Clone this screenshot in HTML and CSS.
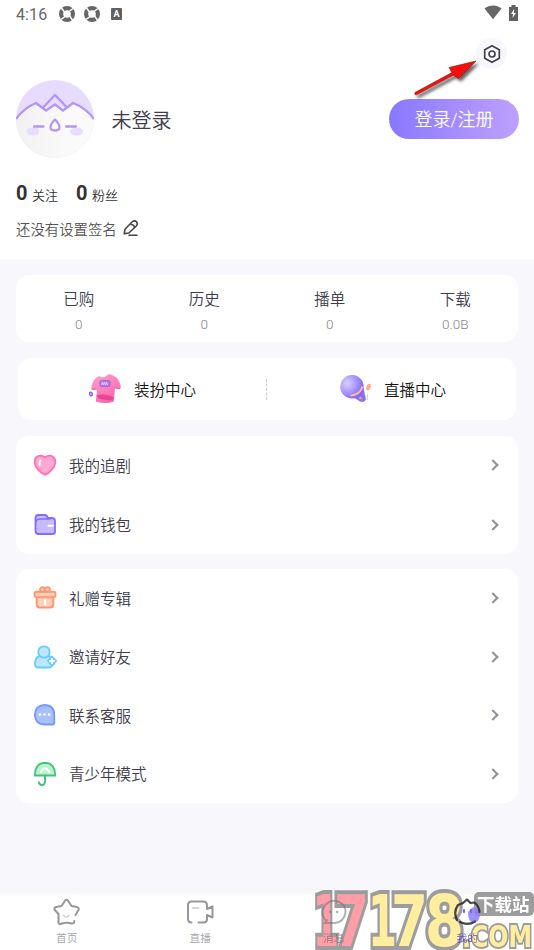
FILE: index.html
```html
<!DOCTYPE html>
<html lang="zh-CN">
<head>
<meta charset="utf-8">
<title>我的</title>
<link rel="stylesheet" href="styles.css">
</head>
<body>
<header class="profile">
  <div class="status">
    <span class="time">4:16</span>
    <svg class="st-ic" width="16" height="16" viewBox="0 0 16 16"><circle cx="8" cy="8" r="5.900" fill="none" stroke="#666" stroke-width="4.200"/><path d="M2.500 2l3 4M14 2.500l-4 3M13.500 14l-3-4M2 13.500l4-3" stroke="#fff" stroke-width="1.500"/></svg>
    <svg class="st-ic gap" width="16" height="16" viewBox="0 0 16 16"><circle cx="8" cy="8" r="5.900" fill="none" stroke="#666" stroke-width="4.200"/><path d="M2.500 2l3 4M14 2.500l-4 3M13.500 14l-3-4M2 13.500l4-3" stroke="#fff" stroke-width="1.500"/></svg>
    <span class="badge-a">A</span>
    <svg class="wifi" width="18" height="15" viewBox="0 0 18 15"><path d="M.5 3.600C5.500-.4 12.500-.4 17.500 3.600L9 14.300z" fill="#666"/></svg>
    <svg class="batt" width="9" height="16" viewBox="0 0 9 16"><path d="M2.500 0h4v2H9v14H0V2h2.500z" fill="#606060"/><path d="M5.200 4L2 9h2l-.4 4L7 8H5z" fill="#fff"/></svg>
  </div>
  <div class="tools"><span class="settings"><svg width="20" height="20" viewBox="0 0 20 20" fill="none" stroke="#41404f" stroke-width="1.700" stroke-linejoin="round"><path d="M10 1.700l7.300 4v8.600l-7.300 4-7.300-4V5.700z"/><circle cx="10" cy="10" r="3"/></svg></span></div>
  <div class="user">
    <svg width="78" height="78" viewBox="0 0 78 78">
      <defs><clipPath id="face"><circle cx="39" cy="39" r="39"/></clipPath><linearGradient id="fg"><stop offset="0" stop-color="#f1f1f2"/><stop offset=".65" stop-color="#fafafa"/></linearGradient></defs>
      <g clip-path="url(#face)"><path fill="#e7dbff" d="M0 0h78v78H0z"/><path fill="url(#fg)" d="M0 39Q8 28 20 23l8 5 11-3 11 3 7-5q13 5 21 16v39H0z"/>
      <path d="M0 39Q8 28 20 23l10 7.500 9-6 8 6 10-7.500q13 5 21 16" fill="none" stroke="#b195fb" stroke-width="2.300" stroke-linejoin="round"/><path d="M27 27.500l12-12.500L51 27.500" fill="none" stroke="#b195fb" stroke-width="2.300" stroke-linejoin="round"/></g>
      <ellipse cx="17" cy="51.500" rx="6.500" ry="4" fill="#e7dbff"/><ellipse cx="60.500" cy="51.500" rx="6.500" ry="4" fill="#e7dbff"/>
      <path d="M18 46.500h9.500M50 46.500h10" stroke="#b195fb" stroke-width="2.300" stroke-linecap="round"/><path d="M39 39.500c6 6 6 11 0 11s-6-5 0-11z" fill="#fff" stroke="#b195fb" stroke-width="2.300" stroke-linejoin="round"/>
    </svg>
    <h1>未登录</h1>
    <button class="login">登录/注册</button>
  </div>
  <div class="counts"><b>0</b><span>关注</span><b class="second">0</b><span>粉丝</span></div>
  <div class="sign"><span>还没有设置签名</span><svg width="16" height="16" viewBox="0 0 16 16" fill="none" stroke="#444" stroke-width="1.600" stroke-linejoin="round" stroke-linecap="round"><path d="M1.200 13.800l.8-4.500L9 2q2.300-2.200 4.300-.3t0 4.300l-7.500 7z"/><path d="M8 4.500q3 0 3.600 3M6 15.200h8"/></svg></div>
  <svg class="arrow" width="78" height="56" viewBox="0 0 78 56"><defs><filter id="sh" x="-20%" y="-20%" width="150%" height="160%"><feDropShadow dx="2.500" dy="3" stdDeviation="1.700" flood-opacity=".6"/></filter></defs><path filter="url(#sh)" d="M4 37.500L41 17.500l-3-5L65 6 47.500 23.500l-5-3.500L5.500 39.800q-2.500 0-1.500-2.300z" fill="#fc0d0d" stroke="#7a1010" stroke-width=".6"/></svg>
</header>
<main>
  <section class="card stats">
    <div><span>已购</span><small>0</small></div><div><span>历史</span><small>0</small></div><div><span>播单</span><small>0</small></div><div><span>下载</span><small>0.0B</small></div>
  </section>
  <section class="card centers">
    <div class="center dress"><svg width="34" height="32" viewBox="0 0 34 32"><defs><linearGradient id="pk" x1="0" y1="0" x2=".6" y2="1"><stop stop-color="#ffa4d1"/><stop offset="1" stop-color="#fb65aa"/></linearGradient></defs><path d="M11 3q5 3 9-1.500 2-.8 4 .5l5 3q3 3.500 4 10l-2 1-4-.5-1.200 13q-8 3-18 0L9 18l-1-1.500-4 .5-1-1Q4 6 11 3z" fill="url(#pk)"/><path d="M4 16.500l4-.5M27 14.500l5 1" stroke="#e4679f" fill="none"/><ellipse cx="17" cy="24.300" rx="8.500" ry="2.600" fill="#e6468f" transform="rotate(8 17 24)"/><rect x="12" y="7.500" width="10" height="6" rx="1.500" fill="#b57be8" stroke="#9565e2"/><path d="M13.500 11.800l1-2.300 1 2.300 1-2.300 1 2.300 1-2.300 1 2.300" stroke="#f8d9ff" fill="none" stroke-width=".9"/><ellipse cx="3" cy="21" rx="1.200" ry="1.800" fill="none" stroke="#7563ff" stroke-width="1.500" transform="rotate(-20 3 21)"/></svg><span>装扮中心</span></div>
    <i class="divider"></i>
    <div class="center live"><svg width="32" height="30" viewBox="0 0 32 30"><defs><radialGradient id="ball" cx=".3" cy=".35" r=".75"><stop stop-color="#d9d0ff"/><stop offset=".55" stop-color="#a594ff"/><stop offset="1" stop-color="#7862fa"/></radialGradient></defs><path d="M11 22l12.500-8 2.500 11.500q-1.500 3.500-6 2z" fill="#8873f6"/><circle cx="12" cy="12.800" r="11.700" fill="url(#ball)"/><path d="M10.500 21.500q9.500-.5 12-9" stroke="#ffb09f" stroke-width="2.200" fill="none"/><circle cx="20.500" cy="24" r="1.300" fill="#ff9b86"/><ellipse cx="28.500" cy="13" rx="2" ry="3.400" transform="rotate(20 28.500 13)" fill="#ffa17d"/><path d="M28 11.700h1.300M27.600 14h1.300" stroke="#ffe3d6" stroke-width=".7"/><path d="M27.500 20v6" stroke="#cfc6ff" stroke-width=".8"/></svg><span>直播中心</span></div>
  </section>
  <section class="card list first">
    <div class="row"><svg viewBox="0 0 24 24"><path d="M12 4.300C7 .3 1.300 4 1.600 9.500 2 15 8 20 12 21.700 16 20 22 15 22.400 9.500 22.700 4 17 .3 12 4.300z" fill="#ffa9d4" stroke="#ff72af" stroke-width="1.800"/><path d="M7.500 7.500Q6 9 6.800 12" fill="none" stroke="#fff" stroke-width="1.800" stroke-linecap="round"/></svg><span>我的追剧</span><i></i></div>
    <div class="row"><svg viewBox="0 0 24 24"><path d="M2.500 11V5q0-3 3-3H12q2 0 2.800 3h4Q22 5 22 8v11q0 2-2.500 2h-14q-3 0-3-3z" fill="#c8baff" stroke="#846bff" stroke-width="1.800"/><path d="M2.500 9q1-3 4-3h11" fill="none" stroke="#846bff" stroke-width="1.600"/><path d="M15.500 12.800h4.500" stroke="#fff" stroke-width="2" stroke-linecap="round"/></svg><span>我的钱包</span><i></i></div>
  </section>
  <section class="card list second">
    <div class="row"><svg viewBox="0 0 24 24" fill="#ffd0bb" stroke="#ff976e" stroke-width="1.900"><path d="M3.700 10h16.600v8.500q0 3-3 3H6.700q-3 0-3-3z"/><rect x="1.500" y="5.800" width="21" height="5.400" rx="2"/><circle cx="9.500" cy="3.600" r="2.400"/><circle cx="14.500" cy="3.600" r="2.400"/><path d="M12 13.500v5.500" stroke="#fff" stroke-width="2.200"/></svg><span>礼赠专辑</span><i></i></div>
    <div class="row"><svg viewBox="0 0 24 24" fill="#bce9ff" stroke="#69caff" stroke-width="1.800"><path d="M2 19q0-7 5-8h9q4 2 5 8l-4 3.500H5q-3 0-3-3.500z"/><circle cx="11" cy="7" r="5.700"/><path d="M19 11.500l4.300 4.500-4.300 4.500-4.300-4.500z" fill="#69caff" stroke-linejoin="round"/><path d="M19 13v6M16 16h6" stroke="#fff" stroke-width="1.900"/></svg><span>邀请好友</span><i></i></div>
    <div class="row"><svg viewBox="0 0 24 24"><path d="M11.500 2q9.500 0 9.800 10v7.500q0 2-2 2h-7.800q-9.500-.5-9.700-9.500Q2 2.500 11.500 2z" fill="#a9c0ff" stroke="#7698ff" stroke-width="1.800" stroke-linejoin="round"/><path d="M7 11.500h.1M11.500 11.500h.1M16 11.500h.1" stroke="#fff" stroke-width="2.700" stroke-linecap="round"/></svg><span>联系客服</span><i></i></div>
    <div class="row"><svg viewBox="0 0 24 24" fill="none" stroke="#3ec57b" stroke-width="1.900" stroke-linecap="round"><path d="M1.900 13.500Q2 1 12 .800q10 .2 10.200 12.700z" fill="#bdf2cd" stroke-linejoin="round"/><path d="M12 13.500v6q0 3.500-3.200 3.500-2.300 0-3-2.700"/><path d="M7.800 10Q12 2.500 16.200 10" stroke="#fff"/></svg><span>青少年模式</span><i></i></div>
  </section>
</main>
<nav>
  <div><svg width="28" height="28" viewBox="0 0 28 28" fill="none" stroke="#97959e" stroke-width="2" stroke-linecap="round" stroke-linejoin="round"><path d="M22.500 17l3-5q1-2.200-1.500-2.900L18.500 8 15 2.700q-1.500-1.700-3 0L8.500 8 3 9Q.5 9.800 1.800 12L5.500 16v8.500q.3 2 2.500 1.300 5.500-2 10.500-.3 3 .5 2.800-2.500"/><path d="M10.500 17.500q3 3 5.500 0" stroke="#d0ced5" stroke-width="1.500"/></svg><span>首页</span></div>
  <div><svg width="28" height="28" viewBox="0 0 28 28" fill="none" stroke="#97959e" stroke-width="2" stroke-linecap="round" stroke-linejoin="round"><path d="M5.500 24.500Q2 24.500 2 21V7q0-3.500 3.500-3.500H17q4 0 4 4V11l5.500-2.500v11L21 17v4q0 3.500-3.500 3.500h-5"/><path d="M6.500 10h6" stroke="#ccc9d1" stroke-width="1.500"/></svg><span>直播</span></div>
  <div class="over"><svg width="28" height="28" viewBox="0 0 28 28" fill="none" stroke="#77727c" stroke-width="2" stroke-linecap="round"><path d="M5 21.500Q0 15 4.500 8 10 1 18 3.500q8 3 7.500 11Q24 24 15 25H5l2-3"/><path d="M10 14h.1M17 14h.1" stroke-width="2.500"/></svg><span>消息</span></div>
  <div class="over active"><svg width="28" height="28" viewBox="0 0 28 28" fill="none" stroke="#29232f" stroke-width="2.200" stroke-linecap="round" stroke-linejoin="round"><path d="M20 9q11 2 5 14Q15 28 15 14z" fill="#8f7dff" stroke="none"/><path d="M4 22Q0 14 5 7l5-2 4-3.500L17.500 5l4-.5Q26 8 26.500 14M7 24q8 4 15-.5"/><path d="M11 12v2M18 12v2" stroke="#6049e6"/></svg><span>我的</span></div>
  <svg class="watermark" width="224" height="62" viewBox="0 0 224 62">
    <g class="digits"><g class="pink"><text x="3" y="57" textLength="26" lengthAdjust="spacingAndGlyphs">1</text><text x="24" y="57" textLength="35" lengthAdjust="spacingAndGlyphs">7</text></g><g><text x="58" y="57" textLength="29" lengthAdjust="spacingAndGlyphs">1</text><text x="81" y="57" textLength="37" lengthAdjust="spacingAndGlyphs">7</text><text x="115" y="57" textLength="39" lengthAdjust="spacingAndGlyphs">8</text></g></g>
    <text class="dotcom" x="152" y="58" textLength="70" lengthAdjust="spacingAndGlyphs">.COM</text>
    <rect x="164" y="3" width="60" height="24" rx="5" fill="#858585"/><text class="site" x="167" y="21.500">下载站</text>
  </svg>
</nav>
</body>
</html>
```

FILE: styles.css
```css
* { box-sizing: border-box; }
body { margin: 0; width: 534px; height: 950px; overflow: hidden; display: flex; flex-direction: column; background: #f7f7fc; color: #403d4c; font-family: Roboto, "Noto Sans CJK SC", sans-serif; font-weight: 350; }
svg { display: block; flex: none; }
.profile { height: 259px; background: #fff; padding: 0 16px; position: relative; flex: none; }
.status { height: 28px; display: flex; align-items: center; color: #666; }
.time { font-size: 16px; font-weight: 400; width: 43px; letter-spacing: .1px; }
.gap { margin-left: 9px; }
.badge-a { width: 11px; height: 12px; margin-left: 11px; background: #606060; color: #fff; border-radius: 1px; font: bold 9px/12px Roboto; text-align: center; }
.wifi { margin: -3px 7px 0 auto; }
.batt { margin-top: -3px; }
.tools { height: 52px; display: flex; justify-content: flex-end; padding: 10px 11px 0 0; }
.settings { width: 31px; height: 31px; border-radius: 50%; background: #f7f7fc; display: grid; place-items: center; }
.user { height: 78px; display: flex; align-items: center; }
h1 { font-size: 20px; font-weight: 350; margin: 3px auto 0 17.500px; line-height: 30px; }
.login { width: 130px; height: 40px; border: 0; border-radius: 20px; background: linear-gradient(90deg, #8978ff, #bfa0ff); color: #fff; font: 350 18px/42px Roboto, "Noto Sans CJK SC", sans-serif; padding: 0; margin-right: -1px; }
.counts { height: 26px; margin-top: 21px; display: flex; align-items: baseline; color: #333; }
.counts b { font-size: 20px; font-weight: 700; line-height: 28px; width: 16px; }
.counts .second { margin-left: 18px; }
.counts span { font-size: 13px; }
.sign { display: flex; align-items: center; gap: 6px; height: 24px; margin-top: 11px; font-size: 14.400px; color: #555; }
.arrow { position: absolute; left: 411px; top: 55px; }
main { padding: 16px 16px 0; flex: 1; }
.card { background: #fff; border-radius: 13px; }
.stats { height: 67px; display: grid; grid-template-columns: repeat(4, 1fr); }
.stats div { display: flex; flex-direction: column; align-items: center; padding-top: 13px; }
.stats span { font-size: 15.500px; line-height: 24px; }
.stats small { font-size: 13.500px; line-height: 20px; margin-top: 2px; color: #85838b; }
.centers { height: 62px; margin: 16px 2px; display: flex; align-items: center; color: #111; font-size: 15.500px; }
.center { display: flex; align-items: center; }
.dress { gap: 12px; width: 248px; padding-left: 70px; }
.live { gap: 12px; padding-left: 73px; }
.divider { height: 21px; border-left: 1px dashed #ccc; }
.list { display: flex; flex-direction: column; margin-bottom: 16px; }
.first { height: 118px; }
.second.card { height: 234px; margin-top: -1px; }
.row { display: flex; align-items: center; flex: none; height: 58.500px; padding: 0 21px 0 17px; font-size: 15.500px; }
.first .row { height: 61px; }
.first .row:first-child { height: 58px; }
.row span { margin-top: -1px; }
.row svg { width: 24px; height: 24px; margin-right: 12px; }
.row i { width: 8px; height: 8px; border: solid #929098; border-width: 2px 2px 0 0; transform: rotate(45deg); margin-left: auto; }
nav { height: 56px; flex: none; background: #fff; display: grid; grid-template-columns: repeat(4, 1fr); position: relative; }
nav div { display: flex; flex-direction: column; align-items: center; padding-top: 4px; font-size: 10.700px; color: #a3a1aa; }
nav span { line-height: 16px; margin-top: 5px; }
nav .over { position: relative; z-index: 1; color: #77606c; }
nav .over svg { opacity: .55; }
nav .over span { opacity: .7; }
nav .active { color: #3a20c8; }
nav .active svg { opacity: .85; }
.watermark { position: absolute; left: 310px; bottom: -1px; opacity: .8; }
.watermark text { paint-order: stroke; stroke: #858585; stroke-linejoin: miter; }
.digits { font: bold 71px "DejaVu Sans", sans-serif; stroke-width: 8px; fill: #ffeb88; }
.digits .pink { fill: #ff8791; }
.dotcom { font: bold 30px "DejaVu Sans", sans-serif; stroke-width: 4px; fill: #ffeb88; }
.watermark .site { font: bold 17.500px "Noto Sans CJK SC", sans-serif; fill: #fff; stroke: none; }
```
